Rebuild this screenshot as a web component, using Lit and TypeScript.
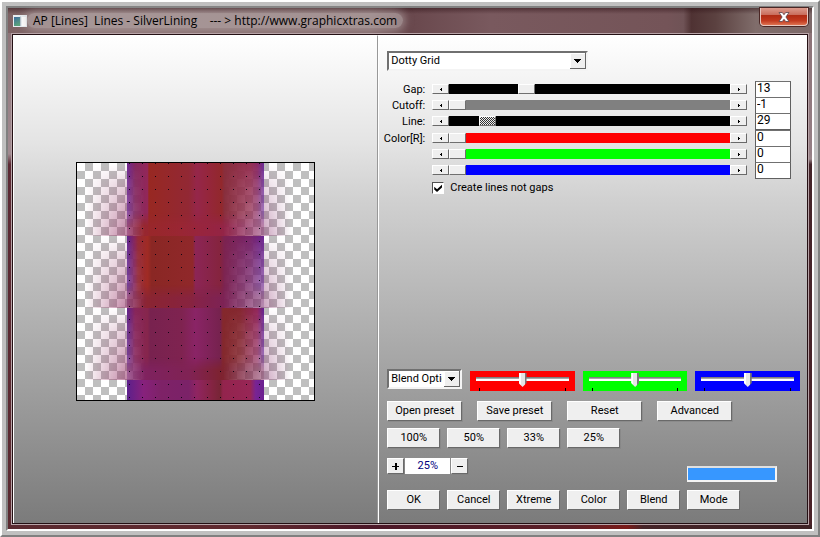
import { LitElement, html, svg, css } from "lit";
import { customElement, state } from "lit/decorators.js";
import { styleMap } from "lit/directives/style-map.js";

interface Param {
  label: string;
  name: string;
  color: string;
  value: number;
  min: number;
  max: number;
  active?: boolean;
}

const PARAMS: Param[] = [
  { label: "Gap:", name: "Gap", color: "#000000", value: 13, min: 0, max: 50 },
  { label: "Cutoff:", name: "Cutoff", color: "#808080", value: -1, min: -1, max: 255 },
  { label: "Line:", name: "Line", color: "#000000", value: 29, min: 0, max: 255, active: true },
  { label: "Color[R]:", name: "Red", color: "#ff0000", value: 0, min: 0, max: 255 },
  { label: "", name: "Green", color: "#00ff00", value: 0, min: 0, max: 255 },
  { label: "", name: "Blue", color: "#0000ff", value: 0, min: 0, max: 255 },
];

type Stop = [number, string];
interface Band {
  y: number;
  h: number;
  stops: Stop[];
  low: Stop[];
}

const BANDS: Band[] = [
  {
    y: 0, h: 73,
    stops: [[0, "#6e2590"], [6, "#84285f"], [15, "#932759"], [16, "#982822"], [45, "#922834"], [51, "#95264a"], [60, "#95263a"], [69, "#92282c"], [71, "#882e3c"], [90, "#953052"], [95, "#8a2862"], [100, "#6c2b98"]],
    low: [[0, "#8a2560"], [12, "#98272a"], [40, "#9a2634"], [68, "#952446"], [100, "#8a2a68"]],
  },
  {
    y: 73, h: 72,
    stops: [[0, "#5f2190"], [6, "#8a2555"], [8, "#952a38"], [15, "#a02b24"], [18, "#8a2724"], [48, "#90282a"], [50, "#8c2556"], [68, "#85243e"], [71, "#7c2350"], [90, "#78246a"], [100, "#6b2490"]],
    low: [[0, "#85255c"], [15, "#8a2534"], [45, "#872341"], [68, "#7d2355"], [100, "#7a2868"]],
  },
  {
    y: 145, h: 72,
    stops: [[0, "#60208a"], [6, "#88255a"], [15, "#86264c"], [17, "#78224f"], [40, "#7f2350"], [50, "#8a2466"], [68, "#76224e"], [70, "#84282c"], [82, "#85272f"], [95, "#912458"], [100, "#642092"]],
    low: [[0, "#852b70"], [15, "#7f2260"], [45, "#802354"], [68, "#7e232e"], [100, "#83305c"]],
  },
  {
    y: 217, h: 20,
    stops: [[0, "#5c208c"], [12, "#87217c"], [25, "#7e2267"], [45, "#7b2268"], [51, "#902561"], [62, "#842442"], [68, "#772536"], [70, "#93244d"], [90, "#982656"], [94, "#782494"], [100, "#6b2190"]],
    low: [],
  },
];

const gradientStops = (stops: Stop[]) =>
  stops.map(([o, c]) => svg`<stop offset=${o + "%"} stop-color=${c}></stop>`);

@customElement("line-preview")
export class LinePreview extends LitElement {
  static styles = css`
    :host { display: block; border: 1px solid #000; }
    svg { display: block; }
  `;

  render() {
    return html`
      <svg width="237" height="237" viewBox="0 0 237 237" role="img" aria-label="Preview">
        <defs>
          <pattern id="checks" width="16" height="16" patternUnits="userSpaceOnUse">
            <rect width="16" height="16" fill="#fff"></rect>
            <path d="M8 0h8v8h-8zM0 8h8v8h-8z" fill="#bfbfbf"></path>
          </pattern>
          <pattern id="dots" x="52" y="0" width="13" height="13" patternUnits="userSpaceOnUse">
            <rect width="1" height="1" fill="#100414"></rect>
          </pattern>
          <linearGradient id="fall" x2="0" y2="1">
            <stop offset="0" stop-color="#fff" stop-opacity="0"></stop>
            <stop offset="0.3" stop-color="#fff" stop-opacity="0.4"></stop>
            <stop offset="1" stop-color="#fff"></stop>
          </linearGradient>
          <linearGradient id="drop" x2="0" y2="1">
            <stop offset="0.68" stop-color="#fff" stop-opacity="0"></stop>
            <stop offset="0.86" stop-color="#fff" stop-opacity="0.9"></stop>
          </linearGradient>
          <mask id="fallMask" maskContentUnits="objectBoundingBox">
            <rect width="1" height="1" fill="url(#fall)"></rect>
          </mask>
          <mask id="dropMask" maskContentUnits="objectBoundingBox">
            <rect width="1" height="1" fill="url(#drop)"></rect>
          </mask>
          <linearGradient id="wingL">
            <stop offset="0" stop-color="#a03468" stop-opacity="0"></stop>
            <stop offset="1" stop-color="#963468" stop-opacity="0.6"></stop>
          </linearGradient>
          <linearGradient id="wingR">
            <stop offset="0" stop-color="#8c3470" stop-opacity="0.45"></stop>
            <stop offset="1" stop-color="#8c3470" stop-opacity="0"></stop>
          </linearGradient>
          <linearGradient id="seeR">
            <stop offset="0" stop-color="#fff" stop-opacity="0"></stop>
            <stop offset="1" stop-color="#fff" stop-opacity="0.48"></stop>
          </linearGradient>
          <linearGradient id="seeL">
            <stop offset="0" stop-color="#fff" stop-opacity="0.28"></stop>
            <stop offset="1" stop-color="#fff" stop-opacity="0"></stop>
          </linearGradient>
          <mask id="seeMaskR" maskContentUnits="objectBoundingBox">
            <rect width="1" height="1" fill="url(#seeR)"></rect>
          </mask>
          <mask id="seeMaskL" maskContentUnits="objectBoundingBox">
            <rect width="1" height="1" fill="url(#seeL)"></rect>
          </mask>
          ${BANDS.map((b, i) => svg`
            <linearGradient id=${"band" + i}>${gradientStops(b.stops)}</linearGradient>
            <linearGradient id=${"low" + i}>${gradientStops(b.low)}</linearGradient>
          `)}
        </defs>
        <rect width="237" height="237" fill="url(#checks)"></rect>
        ${BANDS.map((b, i) => svg`
          <rect x="50" y=${b.y} width="137" height=${b.h} fill=${`url(#band${i})`}></rect>
          ${b.low.length
            ? svg`
              <rect x="50" y=${b.y} width="137" height=${b.h} fill=${`url(#low${i})`} mask="url(#dropMask)"></rect>
              <g mask="url(#fallMask)">
                <rect x="8" y=${b.y} width="42" height=${b.h} fill="url(#wingL)"></rect>
                <rect x="187" y=${b.y} width="28" height=${b.h} fill="url(#wingR)"></rect>
                <rect x="146" y=${b.y} width="41" height=${b.h} fill="url(#checks)" mask="url(#seeMaskR)"></rect>
                <rect x="50" y=${b.y} width="18" height=${b.h} fill="url(#checks)" mask="url(#seeMaskL)"></rect>
              </g>`
            : ""}
        `)}
        <rect x="50" y="0" width="137" height="237" fill="url(#dots)"></rect>
      </svg>
    `;
  }
}

@customElement("app-root")
export class AppRoot extends LitElement {
  @state() private lines = true;

  static styles = css`
    :host {
      display: block;
      font: 11px/14px Roboto, "Liberation Sans", Arial, sans-serif;
      color: #000;
    }
    * { box-sizing: border-box; }
    button, input, select { font: inherit; color: inherit; margin: 0; }
    .bezel {
      display: flex;
      min-height: 100vh;
      border: 2px solid;
      border-color: #fff #808080 #808080 #fff;
      background: #c0c0c0;
      padding: 4px;
    }
    .bevel {
      flex: 1;
      display: flex;
      min-width: 0;
      border: 2px solid;
      border-color: #808080 #fff #fff #808080;
    }
    .glass {
      flex: 1;
      display: flex;
      flex-direction: column;
      min-width: 0;
      padding: 0 3px 4px;
      background:
        linear-gradient(90deg, #5a2a30, #612a30 30%, #4c1828 45%, #5c2028 70%, #7a1a18 77%, #452428 79%, #3f2225) bottom / 100% 4px no-repeat,
        linear-gradient(#8a7074, #957f85 28%, #9a868a 29%, #44242a 30%, #4a2228) right / 4px 100% no-repeat,
        linear-gradient(#8a7074, #a08a90 28%, #5c2a34 30%, #5a2a30);
    }
    .titlebar {
      display: flex;
      align-items: center;
      height: 25px;
      margin: 0 -3px;
      padding: 0 4px 0 5px;
      background:
        linear-gradient(rgba(45, 15, 20, .5), rgba(45, 15, 20, 0) 6px),
        linear-gradient(90deg, #7d6264, #8b7374 10%, #846a6c 45%, #69484d 50%, #79595e 60%, #745458 82%, #6f5356 84%, #4f3233 85%, #5b4140 88%, #806d6b 93%, #7c6868);
    }
    .icon { flex: none; display: block; }
    h1 {
      margin: 0;
      padding: 0 6px;
      font: 12px/15px "Open Sans", "Noto Sans", sans-serif;
      white-space: pre;
      border-radius: 8px;
      background: rgba(190, 178, 178, .55);
      box-shadow: 0 0 8px 2px rgba(190, 178, 178, .55);
    }
    .close {
      align-self: flex-start;
      margin-left: auto;
      width: 48px;
      height: 18px;
      padding: 0;
      border: 1px solid #e8c8c0;
      border-top: 0;
      border-radius: 0 0 4px 4px;
      background: linear-gradient(#dc9a8c, #c96d5c 40%, #b02c14 44%, #c23a20 75%, #de7250);
      box-shadow: 0 0 0 1px #4a2624;
    }
    .close svg { display: block; margin: 0 auto; }
    .client {
      flex: 1;
      display: flex;
      margin: 1px;
      border: 1px solid #241014;
      outline: 1px solid #b8a4a8;
      background: linear-gradient(#fff, #e4e4e4 22%, #d0d0d0 34%, #7b7b7b);
    }
    .stage {
      flex: 0 0 46%;
      display: flex;
      align-items: center;
      justify-content: center;
      padding: 3px 1px 0 0;
      border-left: 1px solid #fff;
      border-top: 1px solid #fff;
      border-right: 1px solid #989898;
    }
    .panel {
      flex: 1;
      min-width: 0;
      display: flex;
      flex-direction: column;
      align-items: stretch;
      padding: 16px 16px 13px 8px;
      border-left: 1px solid #fff;
    }
    .combo { position: relative; display: block; }
    .combo select {
      display: block;
      width: 100%;
      height: 20px;
      padding: 0 18px 0 2px;
      appearance: none;
      border: 2px solid;
      border-color: #707070 #f4f4f4 #f4f4f4 #707070;
      border-radius: 0;
      background: #fff;
      text-overflow: clip;
    }
    .combo svg {
      position: absolute;
      right: 2px;
      top: 2px;
      pointer-events: none;
    }
    .combo.effect { width: 201px; }
    .combo.blend { width: 75px; }
    .face {
      border: 1px solid;
      border-color: #fff #696969 #696969 #fff;
      border-radius: 0;
      background: #efefef;
      box-shadow: 1px 1px 0 #80808080;
      padding: 0;
    }
    .params { margin: 10px 0 0 -4px; }
    .param {
      display: grid;
      grid-template-columns: 42px minmax(0, 1fr) 36px;
      column-gap: 7px;
      height: 16px;
    }
    .param:nth-child(3) { margin-bottom: 1px; }
    .param label { text-align: right; line-height: 18px; white-space: nowrap; }
    .scroll { display: flex; height: 10px; margin: 3px 1px 0 0; }
    .scroll .face { flex: none; width: 17px; height: 10px; box-shadow: none; display: grid; place-items: center; }
    .scroll input {
      flex: 1;
      min-width: 0;
      height: 10px;
      appearance: none;
      background: var(--track);
    }
    .scroll input::-webkit-slider-thumb {
      appearance: none;
      width: 17px;
      height: 10px;
      border: 1px solid;
      border-color: #fff #707070 #707070 #fff;
      background: #efefef;
    }
    .scroll input.active::-webkit-slider-thumb {
      background: repeating-conic-gradient(#333 0 25%, #eee 0 50%) 0 0 / 2px 2px;
    }
    .num {
      width: 36px;
      height: 17px;
      padding: 0 0 3px 1px;
      border: 1px solid #606060;
      border-top-color: #707070;
      border-radius: 0;
      background: #fff;
      font-size: 12px;
      line-height: 13px;
    }
    .check {
      display: flex;
      align-items: center;
      gap: 6px;
      margin: 3px 0 0 45px;
      height: 14px;
      align-self: flex-start;
    }
    .check input {
      appearance: none;
      width: 12px;
      height: 12px;
      border: 1px solid;
      border-color: #505050 #fff #fff #505050;
      background: #fff;
      display: grid;
      place-items: center;
    }
    .check input:checked::before {
      content: "";
      width: 8px;
      height: 8px;
      background: #000;
      clip-path: polygon(0 35%, 35% 65%, 100% 5%, 100% 40%, 35% 100%, 0 70%);
    }
    .bottom { margin-top: auto; }
    .mix { display: flex; gap: 8px; height: 22px; margin-bottom: 10px; margin-right: -9px; }
    .tone {
      flex: 1;
      min-width: 0;
      height: 20px;
      margin-top: 2px;
      padding: 2px 6px 4px;
      background:
        linear-gradient(#000, #000) 9px 100% / 1px 3px no-repeat,
        linear-gradient(#000, #000) calc(100% - 9px) 100% / 1px 3px no-repeat,
        var(--tone);
    }
    .tone input {
      display: block;
      width: 100%;
      height: 14px;
      appearance: none;
      background: linear-gradient(#808080 0 1px, #a8a8a8 1px 2px, #fff 2px) 0 4px / 100% 4px no-repeat;
    }
    .tone input::-webkit-slider-thumb {
      appearance: none;
      width: 8px;
      height: 14px;
      background: linear-gradient(90deg, #fff 0 2px, #e6e6e6 2px 6px, #777 6px);
      clip-path: polygon(0 0, 100% 0, 100% 72%, 50% 100%, 0 72%);
    }
    .row { display: flex; }
    .row button { height: 20px; white-space: nowrap; }
    .wide { gap: 15px; margin-bottom: 7px; }
    .wide button { width: 75px; }
    .tight { gap: 7px; }
    .tight button { width: 53px; }
    .zoom { display: flex; align-items: flex-start; gap: 1px; height: 24px; margin: 10px 0 8px; }
    .zoom .face { width: 17px; height: 16px; display: grid; place-items: center; }
    .zoom input {
      width: 45px;
      height: 16px;
      padding: 0 0 2px;
      border: 0;
      background: #fff;
      color: #000080;
      text-align: center;
    }
    progress {
      appearance: none;
      align-self: flex-end;
      margin: 0 14px 0 auto;
      width: 90px;
      height: 16px;
      border: 2px solid #f4f4f4;
      border-left-width: 1px;
      border-top-color: #e0e0e0;
      background: #fff;
    }
    progress::-webkit-progress-bar { background: #fff; }
    progress::-webkit-progress-value { background: #3797ff; }
  `;

  private arrow(w: number, h: number) {
    return html`<svg width=${w} height=${h} viewBox="0 0 16 16" preserveAspectRatio="none" aria-hidden="true" shape-rendering="crispEdges">
      <rect width="16" height="16" fill="#efefef"></rect>
      <path d="M0.500 16V0.500H16" fill="none" stroke="#fff"></path>
      <path d="M0 15.500H15.500V0" fill="none" stroke="#666"></path>
      <path d="M4 6h7v1h-1v1h-1v1h-1v1h-1v-1h-1v-1h-1v-1h-1z" fill="#000"></path>
    </svg>`;
  }

  private param(p: Param) {
    const id = "p-" + p.name;
    return html`
      <div class="param">
        <label for=${id}>${p.label}</label>
        <div class="scroll">
          <button class="face" aria-label=${p.name + " down"}>
            <svg width="2" height="3" viewBox="0 0 2 3" shape-rendering="crispEdges"><path d="M1 0h1v3h-1v-1h-1v-1h1z"></path></svg>
          </button>
          <input type="range" id=${id} aria-label=${p.name} class=${p.active ? "active" : ""}
            min=${p.min} max=${p.max} .value=${String(p.value)} style=${styleMap({ "--track": p.color })} />
          <button class="face" aria-label=${p.name + " up"}>
            <svg width="2" height="3" viewBox="0 0 2 3" shape-rendering="crispEdges"><path d="M0 0h1v1h1v1h-1v1h-1z"></path></svg>
          </button>
        </div>
        <input class="num" type="text" aria-label=${p.name + " value"} .value=${String(p.value)} />
      </div>
    `;
  }

  render() {
    const buttons = (names: string[]) => names.map((n) => html`<button class="face">${n}</button>`);
    return html`
      <div class="bezel"><div class="bevel"><main class="glass">
        <header class="titlebar">
          <svg class="icon" width="14" height="12" viewBox="0 0 14 12" aria-hidden="true">
            <defs><linearGradient id="ico" x2="0.3" y2="1"><stop stop-color="#3f6da0"></stop><stop offset="1" stop-color="#58a27c"></stop></linearGradient></defs>
            <rect width="14" height="12" fill="#e9eef2"></rect>
            <rect x="1" y="2" width="6" height="9" fill="url(#ico)"></rect>
            <rect x="9" y="2" width="4" height="9" fill="#fff"></rect>
            <path d="M7.500 1.500V11" stroke="#b7c3cc"></path>
          </svg>
          <h1>AP [Lines]  Lines - SilverLining    --- &gt; http://www.graphicxtras.com</h1>
          <button class="close" aria-label="Close">
            <svg width="12" height="10" viewBox="0 0 12 10"><path d="M1 .5h3.300L6 2.700 7.700 .5H11L7.900 5 11 9.500H7.700L6 7.300 4.300 9.500H1L4.100 5z" fill="#fff" stroke="#59434a" stroke-width="0.800"></path></svg>
          </button>
        </header>
        <div class="client">
          <section class="stage"><line-preview></line-preview></section>
          <section class="panel">
            <div class="combo effect">
              <select aria-label="Effect"><option>Dotty Grid</option></select>
              ${this.arrow(16, 16)}
            </div>
            <div class="params">${PARAMS.map((p) => this.param(p))}</div>
            <label class="check">
              <input type="checkbox" .checked=${this.lines}
                @change=${(e: Event) => (this.lines = (e.target as HTMLInputElement).checked)} />
              Create lines not gaps
            </label>
            <div class="bottom">
              <div class="mix">
                <div class="combo blend">
                  <select aria-label="Blend options"><option>Blend Options</option></select>
                  ${this.arrow(16, 16)}
                </div>
                ${[["Red", "#ff0000"], ["Green", "#00ff00"], ["Blue", "#0000ff"]].map(([n, c]) => html`
                  <div class="tone" style=${styleMap({ "--tone": c })}>
                    <input type="range" aria-label=${n + " balance"} min="0" max="100" .value=${"50"} />
                  </div>`)}
              </div>
              <div class="row wide">${buttons(["Open preset", "Save preset", "Reset", "Advanced"])}</div>
              <div class="row tight">${buttons(["100%", "50%", "33%", "25%"])}</div>
              <div class="zoom">
                <button class="face" aria-label="Zoom in"><svg width="7" height="7" viewBox="0 0 7 7"><path d="M3 0h2v3h2v1h-2v3h-2v-3h-3v-1h3z"></path></svg></button>
                <input type="text" aria-label="Zoom" .value=${"25%"} />
                <button class="face" aria-label="Zoom out"><svg width="6" height="1" viewBox="0 0 6 1"><path d="M0 0h6v1h-6z"></path></svg></button>
                <progress max="100" value="100" aria-label="Progress"></progress>
              </div>
              <div class="row tight">${buttons(["OK", "Cancel", "Xtreme", "Color", "Blend", "Mode"])}</div>
            </div>
          </section>
        </div>
      </main></div></div>
    `;
  }
}
